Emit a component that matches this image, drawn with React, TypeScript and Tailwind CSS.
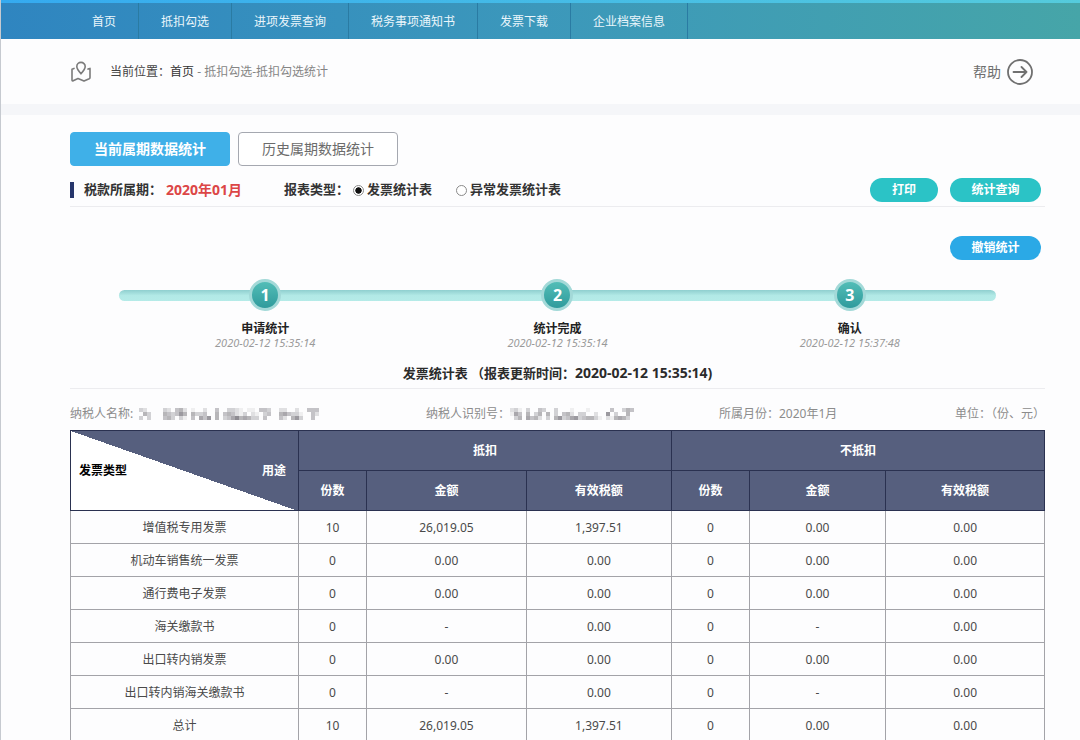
import { useState } from "react";

const navItems = ["首页", "抵扣勾选", "进项发票查询", "税务事项通知书", "发票下载", "企业档案信息"];

const steps = [
  { label: "申请统计", time: "2020-02-12 15:35:14" },
  { label: "统计完成", time: "2020-02-12 15:35:14" },
  { label: "确认", time: "2020-02-12 15:37:48" },
];

const rows = [
  { name: "增值税专用发票", cells: ["10", "26,019.05", "1,397.51", "0", "0.00", "0.00"] },
  { name: "机动车销售统一发票", cells: ["0", "0.00", "0.00", "0", "0.00", "0.00"] },
  { name: "通行费电子发票", cells: ["0", "0.00", "0.00", "0", "0.00", "0.00"] },
  { name: "海关缴款书", cells: ["0", "-", "0.00", "0", "-", "0.00"] },
  { name: "出口转内销发票", cells: ["0", "0.00", "0.00", "0", "0.00", "0.00"] },
  { name: "出口转内销海关缴款书", cells: ["0", "-", "0.00", "0", "-", "0.00"] },
  { name: "总计", cells: ["10", "26,019.05", "1,397.51", "0", "0.00", "0.00"] },
];

// masked values, one digit per 4px block: 0 = blank, 9 = darkest
const maskedName = [
  "320000320452010020040033210110443002200200444",
  "053000543475053340050454213021034005643310042",
  "303000453031040647050346856533040004205730040",
];
const maskedId = [
  "2310300430030001000100000400354",
  "1640503505030452033002007030050",
  "0350645203057346734553102156530",
];

function Masked({ data }: { data: string[] }) {
  const w = data[0].length * 4;
  return (
    <svg width={w} height={12} viewBox={`0 0 ${w} 12`} aria-hidden="true" shapeRendering="crispEdges">
      {data.flatMap((line, y) =>
        [...line].map((d, x) => (
          <rect key={`${x}-${y}`} x={x * 4} y={y * 4} width={4} height={4} fill="#55525a" opacity={Number(d) / 12} />
        ))
      )}
    </svg>
  );
}

function MapIcon() {
  return (
    <svg width="22" height="22" viewBox="0 0 22 22" fill="none" stroke="#7b7b7b" strokeWidth="1.6" strokeLinejoin="round" strokeLinecap="round" aria-hidden="true">
      <path d="M11 12.8C8.600 10.200 6.800 8 6.800 5.600a4.200 4.200 0 0 1 8.400 0c0 2.400-1.800 4.600-4.200 7.200Z" />
      <path d="M4 7.400 2 8.200v10.800c0 .8.500 1 1.200.7l4.800-2.200 6 2.600 5.200-2.300c.6-.3.800-.6.800-1.200V7.400l-2 .7" />
    </svg>
  );
}

function HelpIcon() {
  return (
    <svg width="26" height="26" viewBox="0 0 26 26" fill="none" stroke="#707070" strokeWidth="1.8" strokeLinecap="round" strokeLinejoin="round" aria-hidden="true">
      <circle cx="13" cy="13" r="12" />
      <path d="M6.5 13h13M14.5 8l5 5-5 5" />
    </svg>
  );
}

const th = "h-10 border border-[#2a3150] bg-[#565f7e] text-center text-xs font-bold text-white";
const td = "h-[33px] border border-[#a3a3a8] pt-px text-center text-xs text-[#4a4a4a]";

export default function App() {
  const [tab, setTab] = useState("current");
  const [report, setReport] = useState("stat");

  const tabClass = (active: boolean) =>
    [
      "h-[34px] w-40 rounded border text-sm",
      active ? "border-[#3fb0e8] bg-[#3fb0e8] font-bold text-white" : "border-[#a5a8b0] bg-white text-[#6b6b6b]",
    ].join(" ");

  const radioClass =
    "h-[11px] w-[11px] appearance-none rounded-full border border-[#8a8a8a] bg-white checked:bg-[radial-gradient(circle,#111_45%,#fff_55%)]";

  return (
    <div className="border-l border-[#c6cad0] bg-[#fdfdfe] font-['Noto_Sans','Noto_Sans_CJK_SC',sans-serif] text-[#333]">
      {/* top nav */}
      <div className="h-[3px] bg-linear-to-r from-[#35aaf0] to-[#55cbdc]" />
      <nav className="bg-linear-to-r from-[#2f85c0] via-[#3c98bb] to-[#46a5a8] pl-[69px]">
        <ul className="flex">
          {navItems.map((item) => (
            <li key={item} className="border-r border-[#2a7ba3]">
              <a href="#" className="block px-[22px] pt-0.5 text-xs leading-[34px] text-[#eaf6fb]">{item}</a>
            </li>
          ))}
        </ul>
      </nav>

      {/* breadcrumb + help */}
      <header className="flex h-[65px] items-center justify-between pr-[47px] pl-[69px]">
        <div className="flex items-center gap-[18px]">
          <MapIcon />
          <p className="text-xs text-[#858585]">
            <span className="text-[#444]">当前位置：</span>
            <a href="#" className="text-[#333]">首页</a> - 抵扣勾选-抵扣勾选统计
          </p>
        </div>
        <a href="#" className="flex items-center gap-1.5 text-sm text-[#6f6f6f]">
          帮助
          <HelpIcon />
        </a>
      </header>
      <div className="h-[11px] bg-[#f5f6f9]" />

      <main className="pt-[17px] pr-[35px] pl-[69px]">
        <div className="flex gap-2">
          <button className={tabClass(tab === "current")} onClick={() => setTab("current")}>当前属期数据统计</button>
          <button className={tabClass(tab === "history")} onClick={() => setTab("history")}>历史属期数据统计</button>
        </div>

        {/* filters */}
        <div className="mt-2 flex h-[33px] items-center border-b border-[#ececef] pr-1 text-[13px] font-bold">
          <span className="mr-2.5 h-4 w-1 bg-[#26356b]" />
          <span>税款所属期：</span>
          <span className="ml-1 text-sm text-[#dc4646]">2020年01月</span>
          <fieldset className="ml-[42px] flex items-center">
            <legend className="float-left">报表类型：</legend>
            <label className="ml-1 flex items-center gap-[3px]">
              <input type="radio" name="report" className={radioClass} checked={report === "stat"} onChange={() => setReport("stat")} />
              发票统计表
            </label>
            <label className="ml-6 flex items-center gap-[3px]">
              <input type="radio" name="report" className={radioClass} checked={report === "abnormal"} onChange={() => setReport("abnormal")} />
              异常发票统计表
            </label>
          </fieldset>
          <div className="ml-auto flex gap-3 text-xs text-white">
            <button className="h-6 w-[68px] rounded-full bg-[#2bc3c6] font-bold">打印</button>
            <button className="h-6 w-[91px] rounded-full bg-[#2bc3c6] font-bold">统计查询</button>
          </div>
        </div>

        <div className="mt-[29px] flex justify-end pr-1">
          <button className="h-6 w-[91px] rounded-full bg-[#2ba9e6] text-xs font-bold text-white">撤销统计</button>
        </div>

        {/* progress */}
        <div className="relative mx-[49px] mt-[19px]">
          <div className="absolute inset-x-0 top-[11px] h-[11px] rounded-full bg-linear-to-b from-[#8fcfcf] via-[#b2e9e6] to-[#b5ebe8]" />
          <ol className="relative grid grid-cols-3">
            {steps.map((step, i) => (
              <li key={step.label} className="flex flex-col items-center">
                <span className="flex h-8 w-8 items-center justify-center rounded-full border-[3px] border-[#a3d9d8] bg-linear-to-b from-[#52bdb7] to-[#2f9b9c] text-base font-bold text-white">
                  {i + 1}
                </span>
                <span className="mt-[11px] text-xs leading-[14px] font-bold text-[#222]">{step.label}</span>
                <time className="text-[11px] leading-[13px] text-[#9a9a9a] italic">{step.time}</time>
              </li>
            ))}
          </ol>
        </div>

        <h1 className="mt-3.5 border-b border-[#ececef] pb-[5px] text-center text-[13px] leading-5 font-bold text-[#2b2b2b]">
          发票统计表 （报表更新时间：<span className="text-sm leading-5">2020-02-12 15:35:14)</span>
        </h1>

        <div className="mt-4 mb-2 grid grid-cols-[356fr_293fr_230fr_96fr] text-xs leading-[17px] text-[#8c8c8c]">
          <p className="flex items-center gap-1.5">纳税人名称: <Masked data={maskedName} /></p>
          <p className="flex items-center">纳税人识别号：<Masked data={maskedId} /></p>
          <p>所属月份：2020年1月</p>
          <p className="text-right">单位：（份、元）</p>
        </div>

        <table className="w-full table-fixed border-collapse">
          <colgroup>
            <col className="w-[23.4%]" />
            <col className="w-[7%]" />
            <col className="w-[16.4%]" />
            <col className="w-[14.9%]" />
            <col className="w-[8%]" />
            <col className="w-[14%]" />
            <col />
          </colgroup>
          <thead>
            <tr>
              <th rowSpan={2} className="border border-[#2a3150] bg-[linear-gradient(to_top_right,#fff_50%,#565f7e_50%)] bg-origin-border bg-no-repeat px-2 text-xs font-bold">
                <div className="flex justify-between pr-1">
                  <span className="text-black">发票类型</span>
                  <span className="text-white">用途</span>
                </div>
              </th>
              <th colSpan={3} className={th}>抵扣</th>
              <th colSpan={3} className={th}>不抵扣</th>
            </tr>
            <tr>
              <th className={th}>份数</th>
              <th className={th}>金额</th>
              <th className={th}>有效税额</th>
              <th className={th}>份数</th>
              <th className={th}>金额</th>
              <th className={th}>有效税额</th>
            </tr>
          </thead>
          <tbody>
            {rows.map((row) => (
              <tr key={row.name}>
                <td className={td}>{row.name}</td>
                {row.cells.map((cell, i) => (
                  <td key={i} className={td}>{cell}</td>
                ))}
              </tr>
            ))}
          </tbody>
        </table>
      </main>
    </div>
  );
}
